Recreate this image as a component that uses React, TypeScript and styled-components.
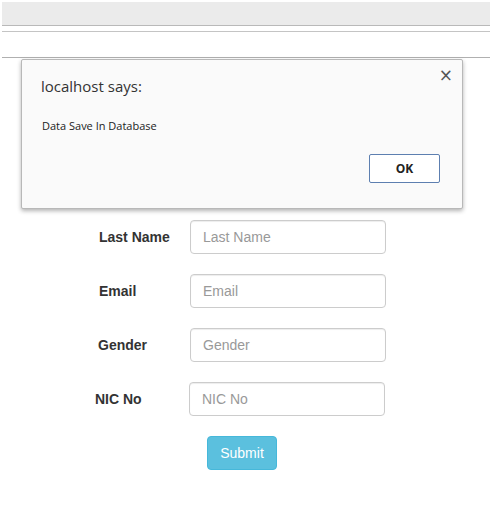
import styled, { createGlobalStyle } from 'styled-components';

const GlobalStyle = createGlobalStyle`
    html, body {
        margin: 0;
        padding: 0;
        background: #ffffff;
    }
    body {
        font-family: "Liberation Sans", Arial, sans-serif;
        color: #333333;
    }
`;

interface ShiftProps {
    shift?: number
}

const fields: { label: string, labelShift: number, inputShift: number }[] = [
    { label: 'Last Name', labelShift: 0, inputShift: 0 },
    { label: 'Email', labelShift: 0, inputShift: 0 },
    { label: 'Gender', labelShift: -1, inputShift: 0 },
    { label: 'NIC No', labelShift: -4, inputShift: -1 },
];

const App = () => {
    return (
        <Page>
            <GlobalStyle />
            <TopBar />
            <Strip />
            <Content>
                <Form>
                    {fields.map(field => (
                        <Row key={field.label}>
                            <Label shift={field.labelShift}>{field.label}</Label>
                            <Input shift={field.inputShift} placeholder={field.label} />
                        </Row>
                    ))}
                    <SubmitButton type="button">Submit</SubmitButton>
                </Form>
            </Content>
            <Dialog>
                <DialogTitle>localhost says:</DialogTitle>
                <CloseButton>×</CloseButton>
                <DialogMessage>Data Save In Database</DialogMessage>
                <DialogFooter>
                    <OkButton type="button">OK</OkButton>
                </DialogFooter>
            </Dialog>
        </Page>
    )
}

const Page = styled.div`
    position: relative;
    width: 492px;
    height: 519px;
    overflow: hidden;
    background: #ffffff;
`;

const TopBar = styled.div`
    margin: 2px 2px 0 2px;
    height: 23px;
    background: #ebebeb;
    border-bottom: 1px solid #b9b9b9;
`;

const Strip = styled.div`
    margin: 5px 2px 0 2px;
    height: 25px;
    border-top: 1px solid #c4c4c4;
    border-bottom: 1px solid #b0b0b0;
`;

const Content = styled.div`
    padding-top: 162px;
`;

const Form = styled.div`
    display: flex;
    flex-direction: column;
    gap: 20px;
`;

const Row = styled.div`
    display: grid;
    grid-template-columns: 190px 196px;
    align-items: center;
`;

const Label = styled.label<ShiftProps>`
    padding-left: ${props => 99 + (props.shift ?? 0)}px;
    font-size: 14px;
    font-weight: bold;
    color: #333333;
`;

const Input = styled.input<ShiftProps>`
    box-sizing: border-box;
    margin-left: ${props => props.shift ?? 0}px;
    height: 34px;
    width: 196px;
    padding: 6px 12px;
    font-family: "Liberation Sans", Arial, sans-serif;
    font-size: 14px;
    color: #555555;
    border: 1px solid #cccccc;
    border-radius: 4px;
    box-shadow: inset 0 1px 1px rgba(0, 0, 0, 0.075);
    &::placeholder {
        color: #999999;
    }
`;

const SubmitButton = styled.button`
    align-self: flex-start;
    margin-left: 207px;
    width: 70px;
    height: 34px;
    font-family: "Liberation Sans", Arial, sans-serif;
    font-size: 14px;
    color: #ffffff;
    background: #5bc0de;
    border: 1px solid #46b8da;
    border-radius: 4px;
`;

const Dialog = styled.div`
    position: absolute;
    left: 21px;
    top: 59px;
    box-sizing: border-box;
    width: 442px;
    height: 150px;
    padding: 16px 22px 0 19px;
    background: #fafafa;
    border: 1px solid #b8b8b8;
    border-radius: 2px;
    box-shadow: 0 2px 4px rgba(0, 0, 0, 0.3);
    font-family: "Open Sans", "Noto Sans", sans-serif;
    color: #222222;
`;

const DialogTitle = styled.div`
    font-size: 15px;
    line-height: 20px;
    color: #333333;
`;

const CloseButton = styled.span`
    position: absolute;
    top: 5px;
    right: 9px;
    font-family: "DejaVu Sans", sans-serif;
    font-size: 17px;
    color: #555555;
`;

const DialogMessage = styled.div`
    margin-top: 22px;
    padding-left: 1px;
    font-size: 11px;
    line-height: 16px;
`;

const DialogFooter = styled.div`
    display: flex;
    justify-content: flex-end;
    margin-top: 20px;
`;

const OkButton = styled.button`
    width: 71px;
    height: 29px;
    font-family: "Open Sans", "Noto Sans", sans-serif;
    font-size: 12px;
    font-weight: bold;
    color: #222222;
    background: #ffffff;
    border: 1px solid #5d7fb0;
    border-radius: 2px;
`;

export default App;
